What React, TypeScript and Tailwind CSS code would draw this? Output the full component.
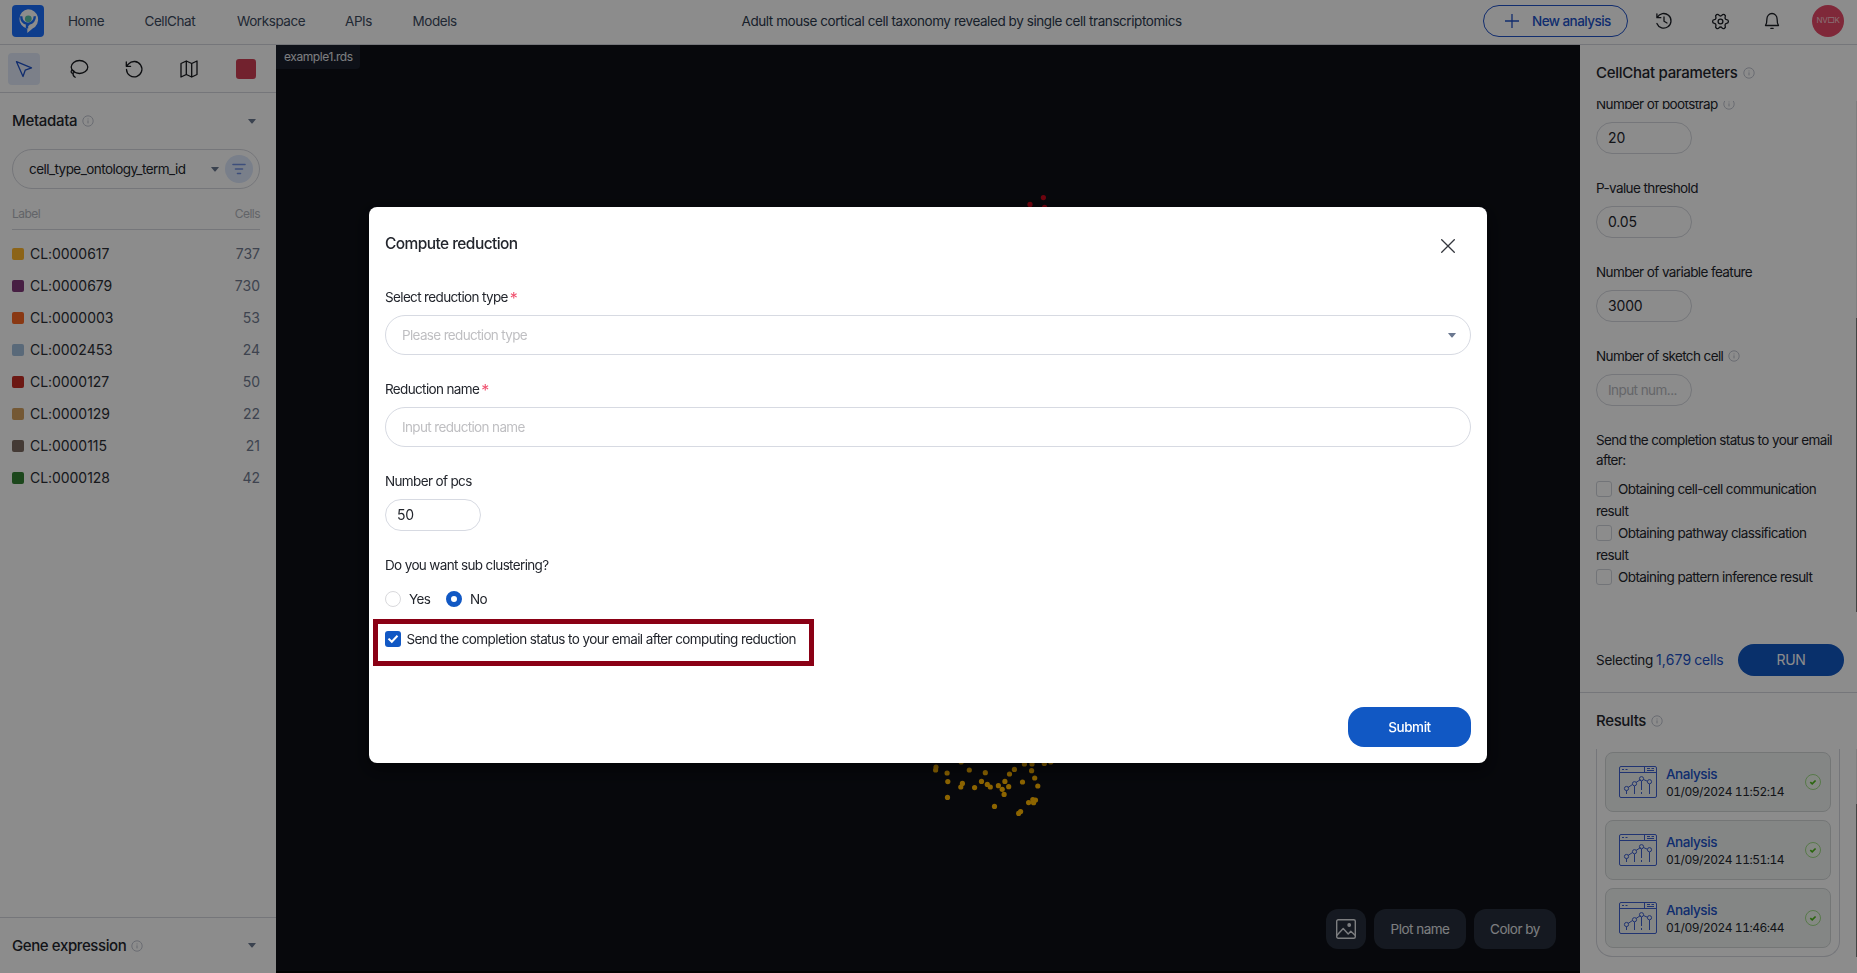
import type { ReactNode } from "react";
import { Settings } from "lucide-react";

const NAV = [
  { label: "Home", cls: "w-[36.5px]" },
  { label: "CellChat", cls: "w-[52.5px]" },
  { label: "Workspace", cls: "w-[68px]" },
  { label: "APIs", cls: "w-[27.5px]" },
  { label: "Models", cls: "w-[45px]" },
];

const CLUSTERS = [
  { id: "CL:0000617", cells: 737, color: "bg-[#ffb72d]" },
  { id: "CL:0000679", cells: 730, color: "bg-[#81397b]" },
  { id: "CL:0000003", cells: 53, color: "bg-[#f96623]" },
  { id: "CL:0002453", cells: 24, color: "bg-[#a3bfdd]" },
  { id: "CL:0000127", cells: 50, color: "bg-[#c52d24]" },
  { id: "CL:0000129", cells: 22, color: "bg-[#d3a160]" },
  { id: "CL:0000115", cells: 21, color: "bg-[#7d6b61]" },
  { id: "CL:0000128", cells: 42, color: "bg-[#338233]" },
];

const RESULTS = ["01/09/2024 11:52:14", "01/09/2024 11:51:14", "01/09/2024 11:46:44"];

const YELLOW_CELLS: [number, number][] = [
  [936, 767], [935.6, 770], [961.2, 762], [969.3, 770], [985.3, 772.7], [947.1, 773], [947.8, 781.6], [947.5, 797.4],
  [962.4, 783.4], [960.8, 787], [974.6, 787.6], [981.5, 781.4], [987.3, 784.4], [990.3, 787], [998.4, 785.7],
  [1002.2, 789.3], [1004.9, 781.4], [1008.7, 786.7], [1004.1, 794.4], [1009.5, 774], [1014.4, 769.4], [994.5, 806.4],
  [1018.6, 813.4], [1020.6, 811.6], [1022.5, 782], [1024.4, 764], [1032, 764], [1031.6, 770.7], [1034.7, 778],
  [1037.8, 786], [1028.6, 802.6], [1032.8, 799.7], [1035.5, 800], [1033.6, 802.7], [1044.3, 763.4], [1050.8, 762],
];

const RED_CELLS: [number, number][] = [[1043.4, 197.6], [1030, 204.4], [1044.6, 207.4]];

function Info() {
  return (
    <svg width="12" height="12" viewBox="0 0 12 12" className="shrink-0 text-[#b9bdc9]" fill="none" stroke="currentColor">
      <circle cx="6" cy="6" r="5.2" strokeWidth="0.9" />
      <path d="M6 5.4v3M6 3.5v.9" strokeWidth="1" />
    </svg>
  );
}

function Caret() {
  return (
    <svg width="8" height="5" viewBox="0 0 8 5" className="shrink-0 fill-[#6b7890]">
      <path d="M0.6 0h6.8q.6 0 .3.6L4.6 4.2q-.6.6-1.2 0L.3.6Q0 0 .6 0z" />
    </svg>
  );
}

function ToolIcon({ children }: { children: ReactNode }) {
  return (
    <svg width="20" height="20" viewBox="0 0 20 20" fill="none" stroke="currentColor" strokeWidth="1.3" strokeLinecap="round" strokeLinejoin="round">
      {children}
    </svg>
  );
}

function Header() {
  return (
    <header className="flex h-[45px] shrink-0 items-center border-b border-[#d5d7de] pb-0.5 pl-3 pr-[13px]">
      <svg width="32" height="32" viewBox="0 0 32 32" className="shrink-0">
        <rect width="32" height="32" rx="4" fill="#1b6fff" />
        <path d="M16 4.2a10.2 10.2 0 0 1 4.6 19.3L15.3 28v-4.3A9.9 9.9 0 0 1 16 4.2z" fill="#fff" />
        <path d="M9.2 11.2q.2 6.6 5.8 7.4v5M22.8 11.2q-.2 6-5.8 7.4l-1.5 1.6" fill="none" stroke="#1b6fff" strokeWidth="2.4" />
        <circle cx="16.3" cy="13.8" r="3.4" fill="#5bc4a9" />
      </svg>
      <nav className="ml-6 flex gap-10 whitespace-nowrap pt-0.5 text-[13.5px] tracking-[-0.43px] text-[#3c4a5e]">
        {NAV.map((n) => (
          <a key={n.label} className={n.cls}>{n.label}</a>
        ))}
      </nav>
      <div className="ml-[198px] flex-1 whitespace-nowrap pt-0.5 text-[13.5px] tracking-[-0.43px] text-[#2c3a4e]">
        <span className="ml-[86px]">Adult mouse cortical cell taxonomy revealed by single cell transcriptomics</span>
      </div>
      <button className="flex h-8 w-[145px] items-center rounded-full border border-[#2052c9] pl-[21px] text-[#2052c9]">
        <svg width="14" height="14" viewBox="0 0 14 14" stroke="currentColor" strokeWidth="1.3">
          <path d="M7 0v14M0 7h14" />
        </svg>
        <span className="ml-[13px] whitespace-nowrap pt-0.5 text-[13.5px] font-medium tracking-[-0.55px]">New analysis</span>
      </button>
      <div className="ml-[26px] flex items-center text-[#1c1f26]">
        <ToolIcon>
          <path d="M3.2 6.5A7.3 7.3 0 1 1 2.9 12.500M2.9 2.8v3.9h3.9M10 6v4.300l3 1.700" />
        </ToolIcon>
        <Settings className="ml-[36.5px] mr-[0.5px] rotate-90" size={19} strokeWidth={1.7} />
        <span className="ml-8 flex">
          <ToolIcon>
            <path d="M3.500 14.500h13q-1.400-1.800-1.400-6.500a5.100 5.500 0 0 0-10.200 0q0 4.700-1.400 6.500zM8.800 17.300h2.400" />
          </ToolIcon>
        </span>
      </div>
      <div className="ml-[30px] flex size-8 items-center justify-center rounded-full bg-[#e84a68] text-[8px] tracking-[-0.35px] text-[#f8c9d2]">
        NV□K
      </div>
    </header>
  );
}

function LeftPanel() {
  return (
    <aside className="flex w-[276px] shrink-0 flex-col">
      <div className="flex h-12 items-center border-b border-[#d5d7de] pl-2 pt-px text-[#16181d]">
        <div className="flex size-8 items-center justify-center rounded bg-[#e2eaf9] text-[#2052c9]">
          <ToolIcon>
            <path d="M2.500 2.700l15 6.200-6.300 2.300L9 17.500z" />
          </ToolIcon>
        </div>
        <span className="ml-[29px] flex">
          <ToolIcon>
            <ellipse cx="10.500" cy="8" rx="8.300" ry="6.500" />
            <path d="M4 11.300a1.500 1.500 0 1 0 .1 2.900 1.500 1.500 0 0 0-.1-2.900M4 14.200q-.2 2.700 2.200 4" />
          </ToolIcon>
        </span>
        <span className="ml-[35px] flex">
          <ToolIcon>
            <path d="M2.500 10.500A7.700 7.700 0 1 0 4.500 5L2.300 7.300M2.300 3v4.300h4.300" />
          </ToolIcon>
        </span>
        <span className="ml-[35px] flex">
          <ToolIcon>
            <path d="M2 4.500l5.300-2.500v13.500L2 18zM7.300 2l5.400 2.500V18l-5.400-2.500M12.700 4.500L18 2v13.500L12.700 18" />
          </ToolIcon>
        </span>
        <span className="ml-[37px] size-5 rounded-[3px] bg-[#cf3f55]" />
      </div>
      <div className="flex flex-1 flex-col px-3">
        <div className="mt-[17px] flex h-[22px] items-center pr-2">
          <span className="mr-[5px] text-[15px] font-medium tracking-[-0.3px]">Metadata</span>
          <Info />
          <span className="ml-auto"><Caret /></span>
        </div>
        <div className="mt-[17px] flex h-10 w-[248px] items-center rounded-full border border-[#d5d7de] pl-4 pr-[6px]">
          <span className="pt-0.5 text-[13.5px] tracking-[-0.56px]">cell_type_ontology_term_id</span>
          <span className="ml-auto mr-1.5"><Caret /></span>
          <span className="flex size-7 items-center justify-center rounded-full bg-[#dce7fb] text-[#6f8fe0]">
            <svg width="14" height="12" viewBox="0 0 14 12" stroke="currentColor" strokeWidth="1.6" strokeLinecap="round">
              <path d="M1 1.500h12M3.500 6h7M5.500 10.500h3" />
            </svg>
          </span>
        </div>
        <div className="mt-[14px] flex h-[27px] w-[248px] items-center justify-between border-b border-[#d5d7de] pb-[5px] text-xs tracking-[-0.55px] text-[#b3b6bd]">
          <span>Label</span>
          <span>Cells</span>
        </div>
        <ul className="mt-2 w-[248px]">
          {CLUSTERS.map((c) => (
            <li key={c.id} className="flex h-8 items-center">
              <span className={`size-3 rounded-[2px] ${c.color}`} />
              <span className="ml-1.5 tracking-[-0.05px] text-[#2b2e35]">{c.id}</span>
              <span className="ml-auto text-[#717b90]">{c.cells}</span>
            </li>
          ))}
        </ul>
      </div>
      <div className="flex h-14 items-center border-t border-[#d5d7de] pl-3 pr-5">
        <span className="mr-[5px] text-[15px] font-medium tracking-[-0.4px]">Gene expression</span>
        <Info />
        <span className="ml-auto"><Caret /></span>
      </div>
    </aside>
  );
}

function Plot() {
  return (
    <main className="relative flex flex-1 flex-col border-b-2 border-[#020203] bg-[#0d0f16]">
      <svg className="absolute inset-0" width="1304" height="926" viewBox="276 45 1304 926">
        {YELLOW_CELLS.map(([x, y]) => (
          <circle key={`${x}-${y}`} cx={x} cy={y} r="2.6" fill="#ffb600" />
        ))}
        {RED_CELLS.map(([x, y]) => (
          <circle key={`${x}-${y}`} cx={x} cy={y} r="2.6" fill="#c8081c" />
        ))}
      </svg>
      <div className="flex h-6 w-[84px] items-center rounded-br bg-[#1a202c] pl-2 text-xs tracking-[-0.42px] text-[#e3e5ea]">example1.rds</div>
      <div className="mb-[22px] mr-6 mt-auto flex justify-end gap-2 text-[13.5px] tracking-[-0.5px] text-[#e3e5ea]">
        <button className="flex size-10 items-center justify-center rounded-xl bg-[#272f3c]">
          <svg width="20" height="20" viewBox="0 0 20 20" fill="none" stroke="currentColor" strokeWidth="1.400" strokeLinejoin="round">
            <rect x="0.700" y="0.700" width="18.600" height="18.600" rx="1.500" />
            <path d="M.7 16.500l6.500-7 5 5.500 2.600-2.700 4.500 4.200" />
            <circle cx="13.200" cy="6" r="1.200" fill="currentColor" />
          </svg>
        </button>
        <button className="h-10 w-[92px] rounded-xl bg-[#272f3c] pt-0.5">Plot name</button>
        <button className="h-10 w-[82px] rounded-xl bg-[#272f3c] pt-0.5">Color by</button>
      </div>
    </main>
  );
}

function NumberField({ label, value, info, muted }: { label: string; value: string; info?: boolean; muted?: boolean }) {
  return (
    <div className="h-[84px]">
      <div className="flex h-5 items-center gap-[5px] whitespace-nowrap text-[13.5px] tracking-[-0.6px]">
        <span className="pt-0.5">{label}</span>
        {info && <Info />}
      </div>
      <div className={`mt-2 flex h-8 w-24 items-center rounded-full border border-[#d5d7de] pl-[11px] ${muted ? "pt-0.5 text-[13.5px] tracking-[-0.56px] text-[#b8bac0]" : "tracking-[-0.15px]"}`}>
        {value}
      </div>
    </div>
  );
}

function CheckLine({ children }: { children: ReactNode }) {
  return (
    <div className="text-[13.5px] leading-[22px] tracking-[-0.58px]">
      <span className="mr-1.5 inline-block size-4 rounded-[3px] border border-[#d0d3da] align-[-3px]" />
      {children}
    </div>
  );
}

function AnalysisIcon() {
  return (
    <svg width="38" height="32" viewBox="0 0 38 32" fill="none" stroke="#3d5fd0" strokeWidth="1">
      <rect x="0.500" y="0.500" width="37" height="31" rx="1.500" />
      <path d="M.5 6.500h37M25.500.5v6M3 3.500h2M6.500 3.500h2M28 2.500h3M32.500 2.500h2.500M28 4.500h7" />
      <path d="M9 21.500l4.500-3M17 16.500l4.500-3M24.500 13.500l4 1.800M7.500 24.500v3.500M15.500 20v8M22.500 15v9M22.500 26v2M30.500 18v10" />
      <circle cx="7.500" cy="22.500" r="2.100" />
      <circle cx="15.500" cy="17.700" r="2.100" />
      <circle cx="22.500" cy="12.700" r="2.100" />
      <circle cx="30.500" cy="15.700" r="2.100" />
    </svg>
  );
}

function RightPanel() {
  return (
    <aside className="flex w-[277px] shrink-0 flex-col">
      <div className="flex h-14 items-center gap-[5px] pl-4">
        <span className="text-[15px] font-medium tracking-[-0.28px]">CellChat parameters</span>
        <Info />
      </div>
      <div className="flex h-[511px] overflow-hidden pl-4">
        <div className="-mt-[7px] w-[260px] shrink-0 pr-4">
          <NumberField label="Number of bootstrap" value="20" info />
          <NumberField label="P-value threshold" value="0.05" />
          <NumberField label="Number of variable feature" value="3000" />
          <NumberField label="Number of sketch cell" value="Input num..." info muted />
          <p className="mb-2 text-[13.5px] leading-5 tracking-[-0.6px]">Send the completion status to your email after:</p>
          <CheckLine>Obtaining cell-cell communication result</CheckLine>
          <CheckLine>Obtaining pathway classification result</CheckLine>
          <CheckLine>Obtaining pattern inference result</CheckLine>
        </div>
        <div className="w-px bg-[#e6e6e6] pt-[217px]">
          <div className="h-full bg-[#7d7d7d]" />
        </div>
      </div>
      <div className="flex h-[81px] items-end border-b border-[#d5d7de] pb-4 pl-4">
        <div className="flex h-8 w-[142px] items-center whitespace-nowrap">
          <span className="w-[60px] pt-0.5 text-[13.5px] tracking-[-0.25px]">Selecting</span>
          <span className="text-[#2052c9]"><span className="tracking-[0.15px]">1,679</span> <span className="-ml-px tracking-[-0.2px]">cells</span></span>
        </div>
        <button className="h-8 w-[106px] rounded-full bg-[#1158c4] tracking-[-0.3px] text-white">RUN</button>
      </div>
      <div className="flex h-14 items-center gap-[5px] pl-4">
        <span className="text-[15px] font-medium tracking-[-0.35px]">Results</span>
        <Info />
      </div>
      <div className="flex h-[208px] pl-4">
        <div className="mr-4 flex w-[244px] flex-col gap-2 rounded-b-2xl border border-t-0 border-[#d5d7de] px-2 pt-[3px]">
          {RESULTS.map((time) => (
            <div key={time} className="flex h-[60px] items-center rounded-lg border border-[#d3d7d8] bg-[#f1f5f3] pl-[13px] pr-[9px]">
              <AnalysisIcon />
              <div className="ml-[9px] whitespace-nowrap pt-0.5">
                <div className="text-[13.5px] leading-[18px] font-medium tracking-[-0.45px] text-[#2052c9]">Analysis</div>
                <div className="text-[12px] leading-[18px] tracking-[-0.48px] tabular-nums">{time}</div>
              </div>
              <svg width="16" height="16" viewBox="0 0 16 16" className="ml-auto" fill="none">
                <circle cx="8" cy="8" r="7.500" stroke="#9fdc86" fill="#f6ffed" fillOpacity="0.500" />
                <path d="M5.300 8.200l1.900 1.700 3.400-3.400" stroke="#4db81a" strokeWidth="1.700" />
              </svg>
            </div>
          ))}
        </div>
        <div className="w-px bg-[#e6e6e6] pt-[55px]">
          <div className="h-full bg-[#7d7d7d]" />
        </div>
      </div>
    </aside>
  );
}

function FieldLabel({ children, required }: { children: ReactNode; required?: boolean }) {
  return (
    <div className="flex h-5 items-center whitespace-nowrap pt-0.5 text-[13.5px] tracking-[-0.64px]">
      {children}
      {required && <span className="ml-0.5 text-[16px] text-[#f0506e]">*</span>}
    </div>
  );
}

function Modal() {
  return (
    <div className="fixed inset-0 bg-black/45 pl-[369px] pt-[207px]">
      <div className="h-[556px] w-[1118px] rounded-lg bg-white px-4 shadow-[0_6px_16px_rgba(0,0,0,0.5)]">
        <div className="flex h-[80px] justify-between pr-4 pt-[25px]">
          <h2 className="text-[15.5px] leading-[23px] font-medium tracking-[-0.57px]">Compute reduction</h2>
          <svg width="14" height="14" viewBox="0 0 14 14" className="mt-[7px]" stroke="#33363d" strokeWidth="1.300">
            <path d="M.3.3l13.400 13.400M13.700.3L.3 13.700" />
          </svg>
        </div>
        <FieldLabel required>Select reduction type</FieldLabel>
        <div className="mt-2 flex h-10 items-center justify-between rounded-full border border-[#d7dae2] pl-4 pr-[14px] text-[13.5px] tracking-[-0.66px] text-[#bfbfc2]">
          <span className="pt-0.5">Please reduction type</span>
          <Caret />
        </div>
        <div className="mt-6">
          <FieldLabel required>Reduction name</FieldLabel>
        </div>
        <div className="mt-2 flex h-10 items-center rounded-full border border-[#d7dae2] pl-4 pt-0.5 text-[13.5px] tracking-[-0.64px] text-[#bfbfc2]">
          Input reduction name
        </div>
        <div className="mt-6">
          <FieldLabel>Number of pcs</FieldLabel>
        </div>
        <div className="mt-2 flex h-8 w-24 items-center rounded-full border border-[#d7dae2] pl-[11px] tracking-[-0.3px]">50</div>
        <div className="mt-6">
          <FieldLabel>Do you want sub clustering?</FieldLabel>
        </div>
        <div className="mt-3 flex h-6 items-center text-[13.5px] tracking-[-0.6px]">
          <span className="size-4 rounded-full border border-[#d9d9dc]" />
          <span className="ml-2 w-[37px] pt-0.5">Yes</span>
          <span className="size-4 rounded-full border-[5px] border-[#1158c4]" />
          <span className="ml-2 pt-0.5">No</span>
        </div>
        <div className="-ml-3 mt-2 flex h-[47px] w-[441px] items-start border-[5px] border-[#8a0015] pl-[7px] pt-[5px]">
          <span className="mt-0.5 flex size-4 shrink-0 items-center justify-center rounded-[3px] bg-[#1158c4]">
            <svg width="12" height="10" viewBox="0 0 12 10" fill="none" stroke="#fff" strokeWidth="2">
              <path d="M1.500 4.600l3.300 3.200 5.700-6" />
            </svg>
          </span>
          <span className="ml-[5.5px] whitespace-nowrap text-[13.5px] leading-5 tracking-[-0.6px]">
            Send the completion status to your email after computing reduction
          </span>
        </div>
        <div className="mt-[41px] flex justify-end">
          <button className="h-10 w-[123px] rounded-2xl bg-[#1158c4] pt-0.5 text-[13.5px] font-medium tracking-[-0.45px] text-white">Submit</button>
        </div>
      </div>
    </div>
  );
}

export default function App() {
  return (
    <div className="flex h-[973px] w-[1857px] flex-col overflow-hidden bg-white font-['Inter',sans-serif] text-sm text-[#23262d]">
      <Header />
      <div className="flex min-h-0 flex-1">
        <LeftPanel />
        <Plot />
        <RightPanel />
      </div>
      <Modal />
    </div>
  );
}
